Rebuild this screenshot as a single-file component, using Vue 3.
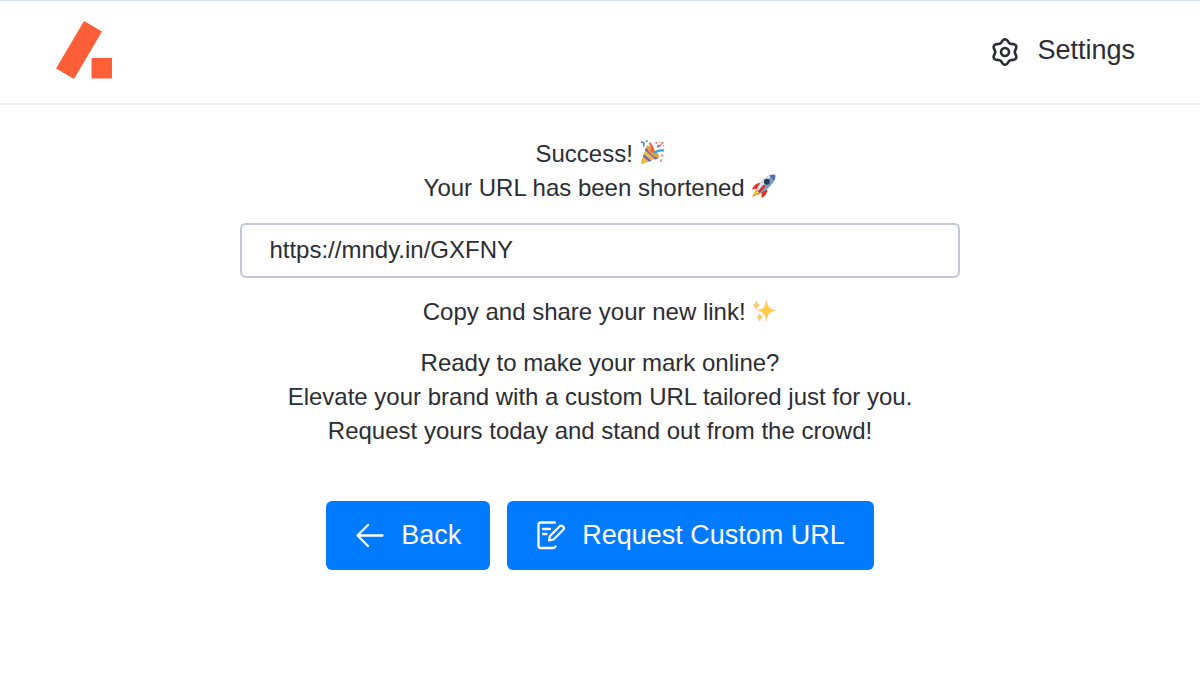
<script setup>
import { ref } from 'vue'

const shortUrl = ref('https://mndy.in/GXFNY')

// Six-lobed gear outline, centred on the origin
const gearPath =
  Array.from({ length: 72 }, (_, i) => {
    const a = (i * 5 * Math.PI) / 180
    const r = 11.2 + 1.5 * Math.cos(6 * a)
    return `${i ? 'L' : 'M'}${(r * Math.sin(a)).toFixed(2)} ${(-r * Math.cos(a)).toFixed(2)}`
  }).join('') + 'Z'
</script>

<template>
  <div class="page">
    <header class="header">
      <a class="logo" href="#" aria-label="Home">
        <svg width="56" height="58" viewBox="0 0 56 58">
          <path d="M28 0L46 10.500L18 58L0 47.500Z" fill="#ff5f38" />
          <path d="M35.500 37H56V57.500H35.500Z" fill="#ff5f38" />
        </svg>
      </a>
      <button class="settings" type="button">
        <svg width="28" height="34" viewBox="-14 -19 28 34" fill="none" stroke="currentColor" stroke-width="2.600" stroke-linejoin="round">
          <path :d="gearPath" />
          <circle r="4" />
        </svg>
        <span>Settings</span>
      </button>
    </header>

    <main class="content">
      <p>
        Success!
        <svg class="emoji" viewBox="0 0 26 26" role="img" aria-label="Party popper">
          <path d="M7 6L20 18L3 25Q0.500 25.500 1 23Z" fill="#f0bd42" />
          <path d="M6 8L19 19L16 20.500L5 10.500ZM4 14.500L12 21.500L9.500 22.500L3 17.500Z" fill="#7467b8" />
          <path d="M7 6Q9 5 15 10Q20 15 20 18Q17 20 11 14Q6 9 7 6Z" fill="#dfa437" />
          <path d="M12 12Q14 8 10 3M13 13Q14 9 12 6" fill="none" stroke="#f25e4b" stroke-width="2.400" />
          <path d="M15 14Q18 10 25 11" fill="none" stroke="#3e9be9" stroke-width="2.200" />
          <path d="M1 2L4 3L4 7M18 8L20 5M6 1H8" fill="none" stroke="#4b7fd0" stroke-width="1.600" />
          <path d="M16 3H18M20 7L24 2M22 15L24 17M22 20V23M18 6H19M24 6H25M20 2H21" fill="none" stroke="#ef7866" stroke-width="1.600" />
        </svg>
      </p>
      <p>
        Your URL has been shortened
        <svg class="emoji" viewBox="0 0 26 26" role="img" aria-label="Rocket">
          <path d="M10 9Q4 9 1 16L8 15ZM17 16Q17 22 11 25L11 18Z" fill="#e03428" />
          <path d="M6 15L1 24L11 20Z" fill="#f58a24" />
          <path d="M7 16L3 22L9 19Z" fill="#ffe052" />
          <path d="M6 16Q10 6 18 2Q24 0 25 1Q26 4 23 9Q18 16 10 20Z" fill="#7d9bbd" />
          <path d="M6 16Q10 6 18 2L22 1L8 18Z" fill="#d6dfeb" />
          <path d="M19 1.500Q24 0 25 1Q26 3 24 7Z" fill="#4a6db5" />
          <circle cx="16.500" cy="8" r="3" fill="#263957" />
          <path d="M14 12L8 19" stroke="#d62f29" stroke-width="2.600" />
        </svg>
      </p>
      <input v-model="shortUrl" class="url" type="text" aria-label="Shortened URL" readonly />
      <p>
        Copy and share your new link!
        <svg class="emoji" viewBox="0 0 26 26" role="img" aria-label="Sparkles">
          <g fill="#ffcf3f" stroke="#f7b8a8" stroke-width="0.500">
            <path d="M15 2Q15.500 11.500 24 13Q15.500 14.500 15 24Q14.500 14.500 6 13Q14.500 11.500 15 2Z" />
            <path d="M4.500 3Q5 6.500 8 7.500Q5 8.500 4.500 12Q4 8.500 1 7.500Q4 6.500 4.500 3Z" />
            <path d="M8 16Q8.500 19 11 20Q8.500 21 8 24.500Q7.500 21 5 20Q7.500 19 8 16Z" />
          </g>
        </svg>
      </p>
      <p class="pitch">
        Ready to make your mark online?<br />
        Elevate your brand with a custom URL tailored just for you.<br />
        Request yours today and stand out from the crowd!
      </p>
      <div class="actions">
        <button class="primary" type="button">
          <svg width="30" height="30" viewBox="0 0 30 30" fill="none" stroke="currentColor" stroke-width="2.300" stroke-linecap="round" stroke-linejoin="round">
            <path d="M27.500 15.500H2.500M13 5L2.500 15.500L13 26" />
          </svg>
          <span>Back</span>
        </button>
        <button class="primary" type="button">
          <svg width="30" height="30" viewBox="0 0 30 30" fill="none" stroke="currentColor" stroke-width="2.300" stroke-linecap="round" stroke-linejoin="round">
            <path d="M19 2.500H4.500Q2.500 2.500 2.500 4.500V26Q2.500 28 4.500 28H17Q19 28 19.500 26.500M7 9H14M7 14H10.500" />
            <path d="M13 20.500L14 16L24 6Q25.500 5 27 6.500Q28.500 8 27.500 9.500L17.500 19.500Z" />
          </svg>
          <span>Request Custom URL</span>
        </button>
      </div>
    </main>
  </div>
</template>

<style>
body {
  margin: 0;
  background: #fff;
}
</style>

<style scoped>
.page {
  border-top: 1px solid #dbe4f3;
  color: #2c2d34;
  font-family: "Liberation Sans", Arial, sans-serif;
  font-size: 24px;
  line-height: 34px;
}
.header {
  display: flex;
  align-items: center;
  justify-content: space-between;
  padding: 20px 65px 24px 56px;
  border-bottom: 2px solid #ebebed;
}
.logo,
.logo svg {
  display: block;
}
button {
  display: flex;
  align-items: center;
  border: 0;
  font-family: inherit;
  cursor: pointer;
}
button svg {
  flex: none;
}
.settings {
  gap: 18px;
  padding: 0;
  background: none;
  color: inherit;
  font-size: 27px;
  line-height: 34px;
}
.content {
  display: flex;
  flex-direction: column;
  align-items: center;
  padding: 32px 20px;
  text-align: center;
}
p {
  margin: 0;
}
.emoji {
  width: 25px;
  height: 25px;
  vertical-align: -3px;
}
.url {
  box-sizing: border-box;
  width: 62%;
  height: 55px;
  margin: 18px 0 17px;
  padding: 0 27px 2px;
  border: 2px solid #c5c6d5;
  border-radius: 6px;
  background: #fff;
  color: inherit;
  font: inherit;
}
.pitch {
  margin-top: 17px;
}
.actions {
  display: flex;
  flex-wrap: wrap;
  justify-content: center;
  gap: 17px;
  margin-top: 53px;
}
.primary {
  gap: 16px;
  padding: 17px 29px 18px;
  border-radius: 6px;
  background: #007aff;
  color: #fff;
  font-size: 27px;
  line-height: 34px;
}
</style>
